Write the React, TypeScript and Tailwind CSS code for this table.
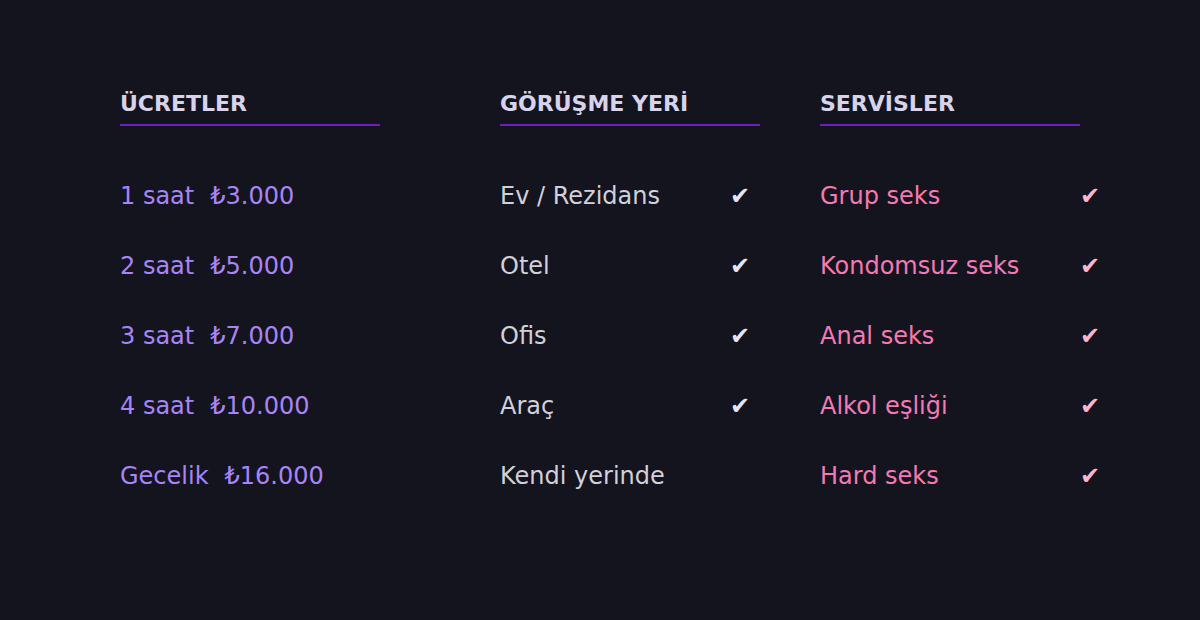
import React from "react";

const font = { fontFamily: '"DejaVu Sans", "Noto Sans", sans-serif' };

const prices = [
  ["1 saat", "₺3.000"],
  ["2 saat", "₺5.000"],
  ["3 saat", "₺7.000"],
  ["4 saat", "₺10.000"],
  ["Gecelik", "₺16.000"],
];

const places: [string, boolean][] = [
  ["Ev / Rezidans", true],
  ["Otel", true],
  ["Ofis", true],
  ["Araç", true],
  ["Kendi yerinde", false],
];

const services = ["Grup seks", "Kondomsuz seks", "Anal seks", "Alkol eşliği", "Hard seks"];

function Header({ title }: { title: string }) {
  return (
    <div className="w-[260px]">
      <div className="text-[22px] leading-[24px] font-bold text-[#d6d3ea]">{title}</div>
      <div className="mt-[8px] h-[2px] bg-[#6d1fc0]" />
    </div>
  );
}

export default function App() {
  return (
    <div className="w-[1200px] h-[620px] bg-[#14141e] pt-[92px] pl-[120px] flex" style={font}>
      <div className="w-[380px] shrink-0">
        <Header title="ÜCRETLER" />
        <div className="mt-[35px] flex flex-col">
          {prices.map(([a, b]) => (
            <div key={a} className="h-[70px] flex items-center gap-[16px] text-[24px] text-[#a884f6]">
              <span>{a}</span>
              <span>{b}</span>
            </div>
          ))}
        </div>
      </div>
      <div className="w-[320px] shrink-0">
        <Header title="GÖRÜŞME YERİ" />
        <div className="mt-[35px] flex flex-col w-[250px]">
          {places.map(([p, c]) => (
            <div key={p} className="h-[70px] flex items-center justify-between text-[24px] text-[#d2d0da]">
              <span>{p}</span>
              {c && <span className="text-[#e6e4f6]">✔</span>}
            </div>
          ))}
        </div>
      </div>
      <div className="w-[280px] shrink-0">
        <Header title="SERVİSLER" />
        <div className="mt-[35px] flex flex-col w-[280px]">
          {services.map((s) => (
            <div key={s} className="h-[70px] flex items-center justify-between text-[24px] text-[#f47ab3]">
              <span>{s}</span>
              <span className="text-[#fbb6cf]">✔</span>
            </div>
          ))}
        </div>
      </div>
    </div>
  );
}
